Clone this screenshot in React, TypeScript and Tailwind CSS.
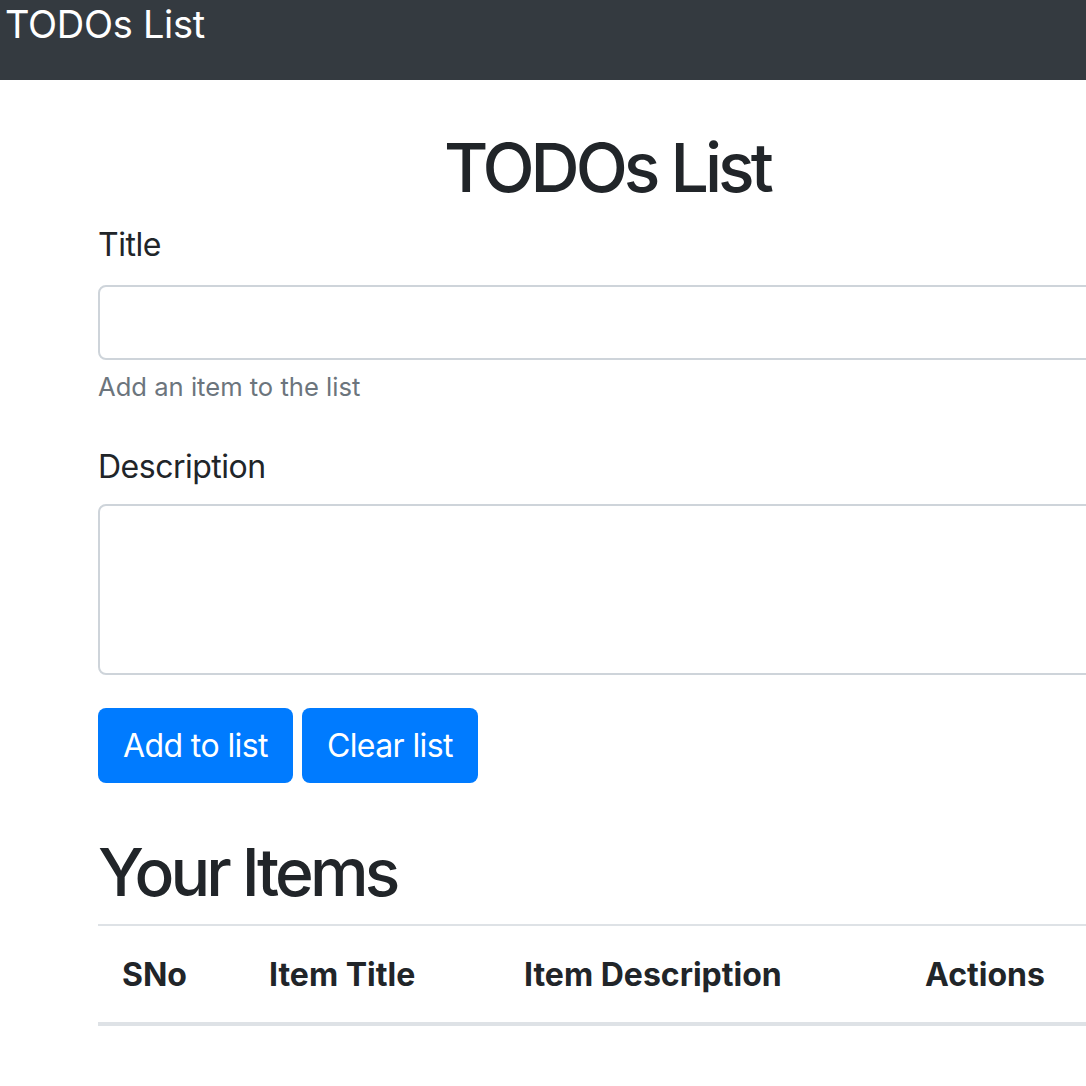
import React from 'react';

const font = "font-['Inter','Noto_Sans',sans-serif]";

export default function App() {
  return (
    <div className={`min-h-[1086px] bg-white text-[#212529] ${font} overflow-hidden`}>
      {/* navbar */}
      <nav className="h-[80px] bg-[#343a40] pl-[5px]">
        <span className="block text-[38px] leading-[48px] tracking-[-0.3px] text-white">TODOs List</span>
      </nav>

      <div className="ml-[98px] w-[1018px]">
        <h1 className="mt-[46px] text-center text-[68px] font-medium leading-[82px] tracking-[-4px]">
          TODOs List
        </h1>

        <form className="mt-[13px]">
          <label className="block text-[32px] leading-[48px] tracking-[-0.5px]">Title</label>
          <input
            type="text"
            className="mt-[16px] block h-[75px] w-full rounded-[8px] border-2 border-[#ced4da] px-6"
          />
          <small className="mt-[8px] block text-[25.6px] leading-[38px] text-[#6c757d]">
            Add an item to the list
          </small>

          <label className="mt-[37px] block text-[32px] leading-[48px] tracking-[-0.5px]">Description</label>
          <textarea
            rows={3}
            className="mt-[13px] block h-[171px] w-full resize-none rounded-[8px] border-2 border-[#ced4da] px-6"
          />

          <div className="mt-[33px] flex gap-[9px]">
            <button
              type="button"
              className="h-[75px] rounded-[8px] bg-[#007bff] px-[25px] text-[32px] tracking-[-0.6px] text-white"
            >
              Add to list
            </button>
            <button
              type="button"
              className="h-[75px] rounded-[8px] bg-[#007bff] px-[25px] text-[32px] tracking-[-0.6px] text-white"
            >
              Clear list
            </button>
          </div>
        </form>

        <h2 className="mt-[49px] text-[66px] font-medium leading-[80px] tracking-[-3.8px]">Your Items</h2>

        <div className="mt-[12px] border-t-2 border-[#dee2e6]">
          <div className="grid grid-cols-[147px_255px_401px_1fr] border-b-4 border-[#dee2e6] text-[32px] font-bold">
            <div className="px-6 pb-[23px] pt-[25px] leading-[48px]">SNo</div>
            <div className="px-6 pb-[23px] pt-[25px] leading-[48px]">Item Title</div>
            <div className="px-6 pb-[23px] pt-[25px] leading-[48px]">Item Description</div>
            <div className="px-6 pb-[23px] pt-[25px] leading-[48px]">Actions</div>
          </div>
        </div>
      </div>
    </div>
  );
}
